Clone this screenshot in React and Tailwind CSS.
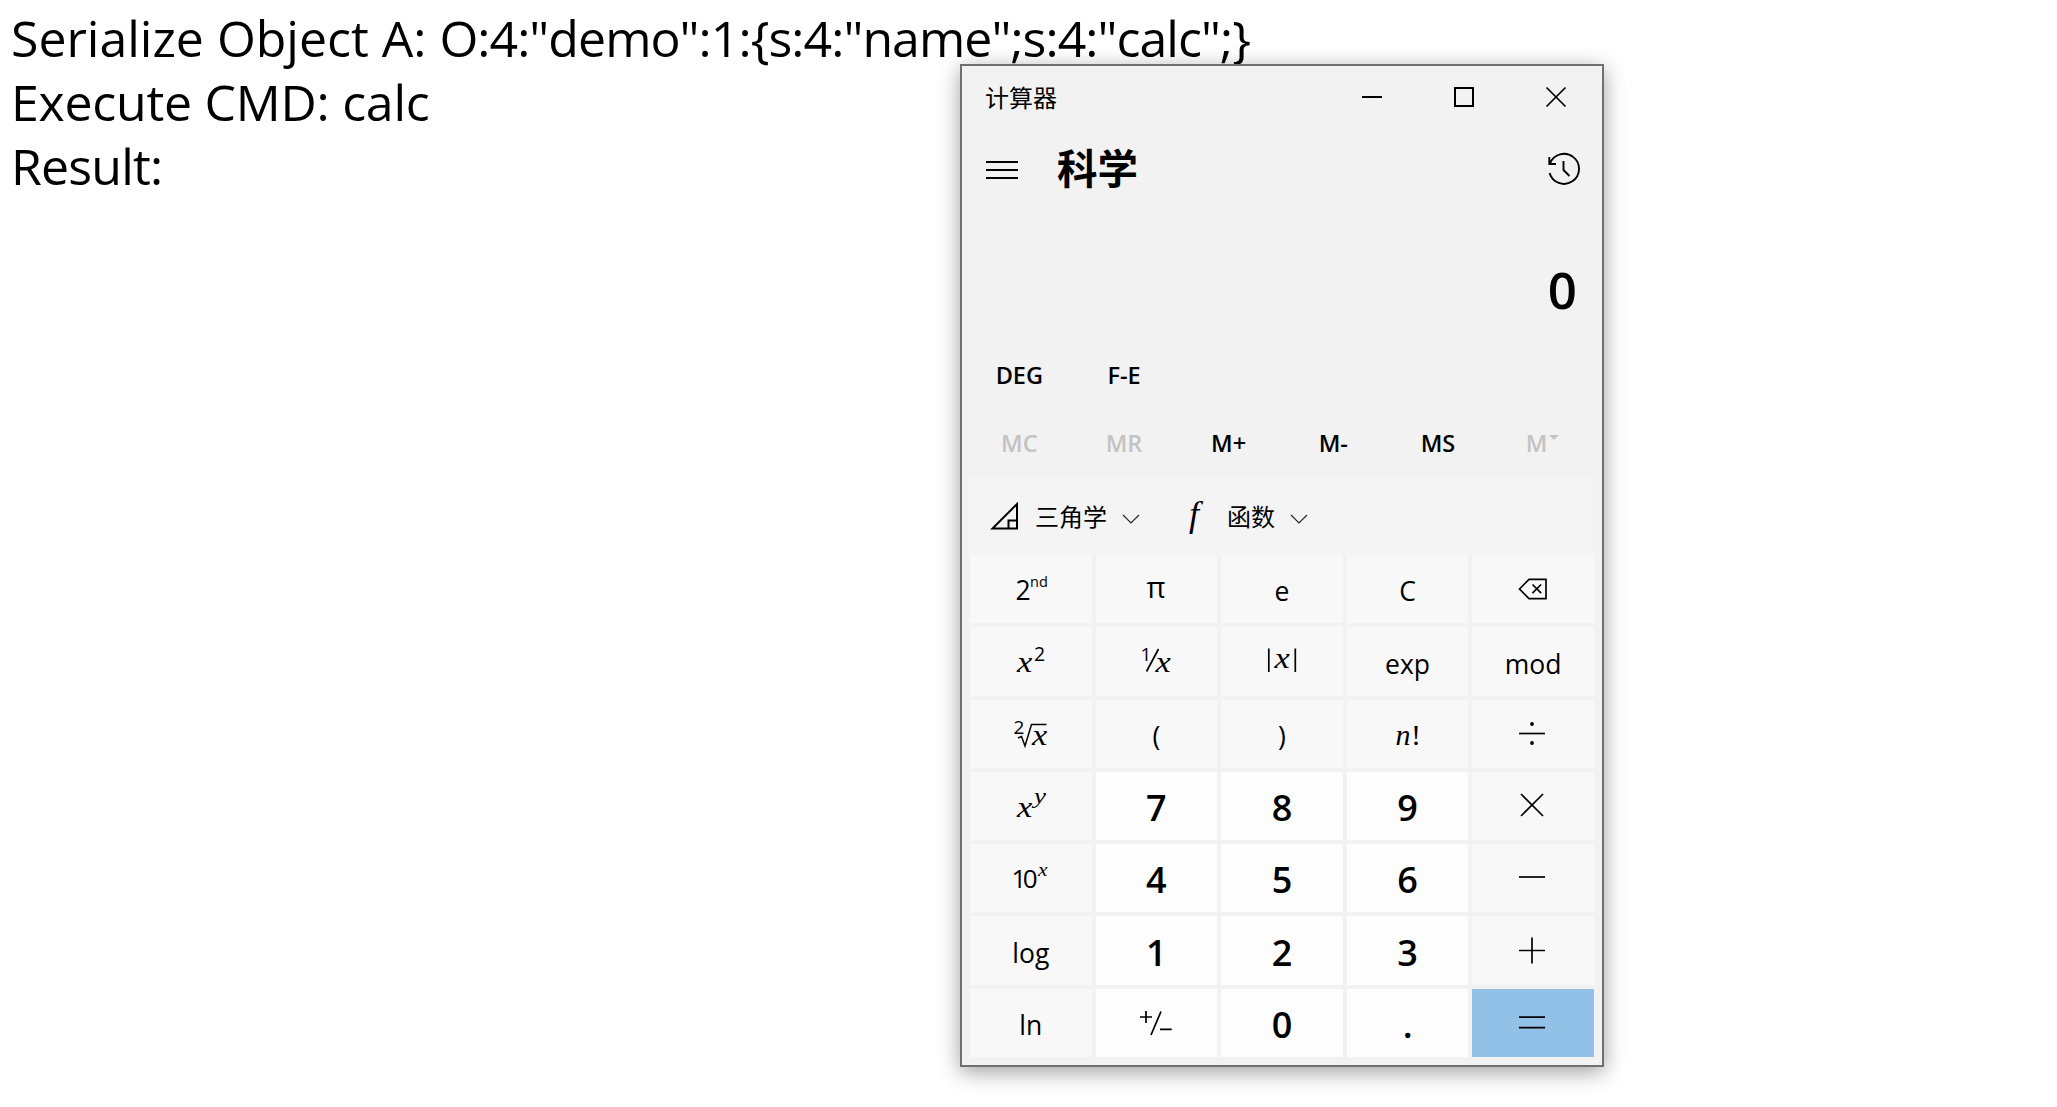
const SANS = "font-['Open_Sans','Noto_Sans_CJK_SC',sans-serif]";
const SERIF = "font-['Liberation_Serif',serif] italic";

const Glyph = ({ children }) => (
  <svg
    viewBox="0 0 122 68"
    className="h-[68px] w-[122px] shrink-0"
    fill="none"
    stroke="black"
    strokeWidth="1.7"
  >
    {children}
  </svg>
);

const T = ({ x, y, s, serif, children, ...rest }) => (
  <text
    x={x}
    y={y}
    fontSize={s}
    fill="black"
    stroke="none"
    className={serif ? SERIF : SANS}
    {...rest}
  >
    {children}
  </text>
);

const X = ({ x, y }) => (
  <T x={x} y={y} s="30" serif textLength="15.2" lengthAdjust="spacingAndGlyphs">x</T>
);

const Num = ({ children }) => <span className="pt-1 text-[36px] leading-none font-semibold">{children}</span>;
const Fn = ({ children }) => <span className="pt-[5px] text-[26.5px] leading-none">{children}</span>;

const KEYS = [
  <Glyph><T x="45.5" y="44.5" s="26.5">2</T><T x="60" y="32" s="14.5">nd</T></Glyph>,
  <Glyph><T x="61" y="43" s="29" textAnchor="middle" fontWeight="500">π</T></Glyph>,
  <Fn>e</Fn>,
  <Fn>C</Fn>,
  <Glyph><path d="M47.5 34 57 24.3H74V43.7H57ZM60.5 29.5l8.6 8.6m0-8.6-8.6 8.6" /></Glyph>,

  <Glyph><X x="47" y="44.5" /><T x="64" y="34" s="19.5">2</T></Glyph>,
  <Glyph><T x="45.5" y="33.5" s="19">1</T><path d="M51.5 44.5 63.5 22" /><X x="60.5" y="44.5" /></Glyph>,
  <Glyph><path d="M47.8 21.5V45M74.3 21.5V45" /><X x="53.5" y="40.5" /></Glyph>,
  <Fn>exp</Fn>,
  <Fn>mod</Fn>,

  <Glyph>
    <T x="43.5" y="34" s="19">2</T>
    <path d="M48 38l3.5-1.5L55 46 61.5 24.6H76.5" strokeWidth="1.5" />
    <X x="62" y="44.5" />
  </Glyph>,
  <Fn>(</Fn>,
  <Fn>)</Fn>,
  <Glyph><T x="48.5" y="44.5" s="30" serif>n</T><T x="64" y="44.5" s="30" serif style={{ fontStyle: "normal" }}>!</T></Glyph>,
  <Glyph><path d="M47 33.5H73" /><circle cx="60" cy="24" r="1.9" fill="black" stroke="none" /><circle cx="60" cy="43" r="1.9" fill="black" stroke="none" /></Glyph>,

  <Glyph><X x="47" y="44.5" /><T x="64" y="31" s="22" serif textLength="12" lengthAdjust="spacingAndGlyphs">y</T></Glyph>,
  <Num>7</Num>,
  <Num>8</Num>,
  <Num>9</Num>,
  <Glyph><path d="M49 22 71 44M71 22 49 44" /></Glyph>,

  <Glyph><T x="41.5" y="44" s="26" textLength="26">10</T><T x="68" y="31.5" s="19" serif textLength="9.5" lengthAdjust="spacingAndGlyphs">x</T></Glyph>,
  <Num>4</Num>,
  <Num>5</Num>,
  <Num>6</Num>,
  <Glyph><path d="M47 33H73" /></Glyph>,

  <Fn>log</Fn>,
  <Num>1</Num>,
  <Num>2</Num>,
  <Num>3</Num>,
  <Glyph><path d="M47 33.5H73M60 20.5V46.5" /></Glyph>,

  <Fn>ln</Fn>,
  <Glyph><path d="M45 28H57M51 22V34M56 46 66 22.5M65 40.3H76.7" /></Glyph>,
  <Num>0</Num>,
  <Num>.</Num>,
  <Glyph><path d="M47 28.2H73M47 38.7H73" /></Glyph>,
];

const keyColor = (i) => {
  const row = Math.floor(i / 5);
  const col = i % 5;
  if (i === 34) return "bg-[#91c1e7]";
  return row > 2 && col > 0 && col < 4 ? "bg-[#fdfdfd]" : "bg-[#f8f8f8]";
};

const Chevron = () => (
  <svg width="18" height="10" viewBox="0 0 18 10" fill="none" stroke="#222" strokeWidth="1.1">
    <path d="M1 1l8 8 8-8" />
  </svg>
);

const Calculator = () => (
  <div className="absolute top-16 left-[960px] flex h-[1003px] w-[644px] flex-col border-2 border-[#707070] bg-[#f2f2f2] shadow-[0_5px_20px_rgba(0,0,0,0.38)]">
    <div className="flex h-[62px] items-center pl-[23px]">
      <span className="flex-1 pt-0.5 text-[24px] leading-none">计算器</span>
      <svg width="276" height="62" viewBox="0 0 276 62" fill="none" stroke="black" strokeWidth="2">
        <path d="M36 31H56M129 22H147V40H129Z" />
        <path d="M220.5 21.5l19 19m0-19-19 19" strokeWidth="1.7" />
      </svg>
    </div>

    <div className="flex h-[82px] items-center pr-[22px] pl-6">
      <svg width="32" height="18" viewBox="0 0 32 18" stroke="black" strokeWidth="2" className="mt-0.5">
        <path d="M0 1H32M0 9H32M0 17H32" />
      </svg>
      <span className="ml-[39px] flex-1 text-[40.5px] leading-none font-bold">科学</span>
      <svg width="32" height="34" viewBox="0 0 32 34" fill="none" stroke="black" strokeWidth="1.9">
        <path d="M1.3 5V12H8M2 11.5A15 15 0 1 1 1.6 21M15.5 9V18L21.5 24" />
      </svg>
    </div>

    <div className="flex h-[134px] items-center justify-end pt-6 pr-[25px] text-[51px] leading-none font-semibold">0</div>

    <div className="grid h-[66px] grid-cols-6 items-center pr-[7px] pb-0.5 pl-[5px] text-center text-[23.5px] leading-none font-semibold">
      <span>DEG</span>
      <span>F-E</span>
    </div>
    <div className="grid h-[66px] grid-cols-6 items-center pt-0.5 pr-[7px] pl-[5px] text-center text-[23.5px] leading-none font-semibold">
      <span className="text-[#c3c3c3]">MC</span>
      <span className="text-[#c3c3c3]">MR</span>
      <span>M+</span>
      <span>M-</span>
      <span>MS</span>
      <span className="flex items-start justify-center gap-0.5 text-[#c3c3c3]">
        M
        <svg width="10" height="12" viewBox="0 0 10 12" fill="currentColor"><path d="M0 3H10L5 8Z" /></svg>
      </span>
    </div>

    <div className="mx-1.5 flex h-[79px] items-center bg-[#f4f4f4] pl-[22px] text-[24px] leading-none">
      <svg width="29" height="28" viewBox="0 0 29 28" fill="none" stroke="black" strokeWidth="2">
        <path d="M2.5 26.5H27V2ZM18.5 26V18.5H27" />
      </svg>
      <span className="ml-4 pt-0.5">三角学</span>
      <span className="mt-1.5 ml-[15px]"><Chevron /></span>
      <span className="ml-[49px] w-[22px] pb-1 font-['Liberation_Serif',serif] text-[36px] italic">f</span>
      <span className="ml-4 pt-0.5">函数</span>
      <span className="mt-1.5 ml-[15px]"><Chevron /></span>
    </div>

    <div className="mx-2 mb-2 grid flex-1 grid-cols-5 grid-rows-7 gap-1">
      {KEYS.map((label, i) => (
        <div key={i} className={`flex min-h-0 min-w-0 items-center justify-center ${keyColor(i)}`}>
          {label}
        </div>
      ))}
    </div>
  </div>
);

export default function App() {
  return (
    <div className={`relative h-[1107px] w-full overflow-hidden bg-white text-black ${SANS}`}>
      <div className="px-[11px] pt-1.5 text-[50px] leading-[64px] whitespace-nowrap">
        <p className="tracking-[-0.94px]">
          <span className="tracking-[-0.02px]">Serialize Object A: </span>
          O:4:"demo":1:{"{"}s:4:"name";s:4:"calc";{"}"}
        </p>
        <p className="tracking-[-0.25px]">Execute CMD: calc</p>
        <p className="tracking-[-0.8px]">Result:</p>
      </div>
      <Calculator />
    </div>
  );
}
